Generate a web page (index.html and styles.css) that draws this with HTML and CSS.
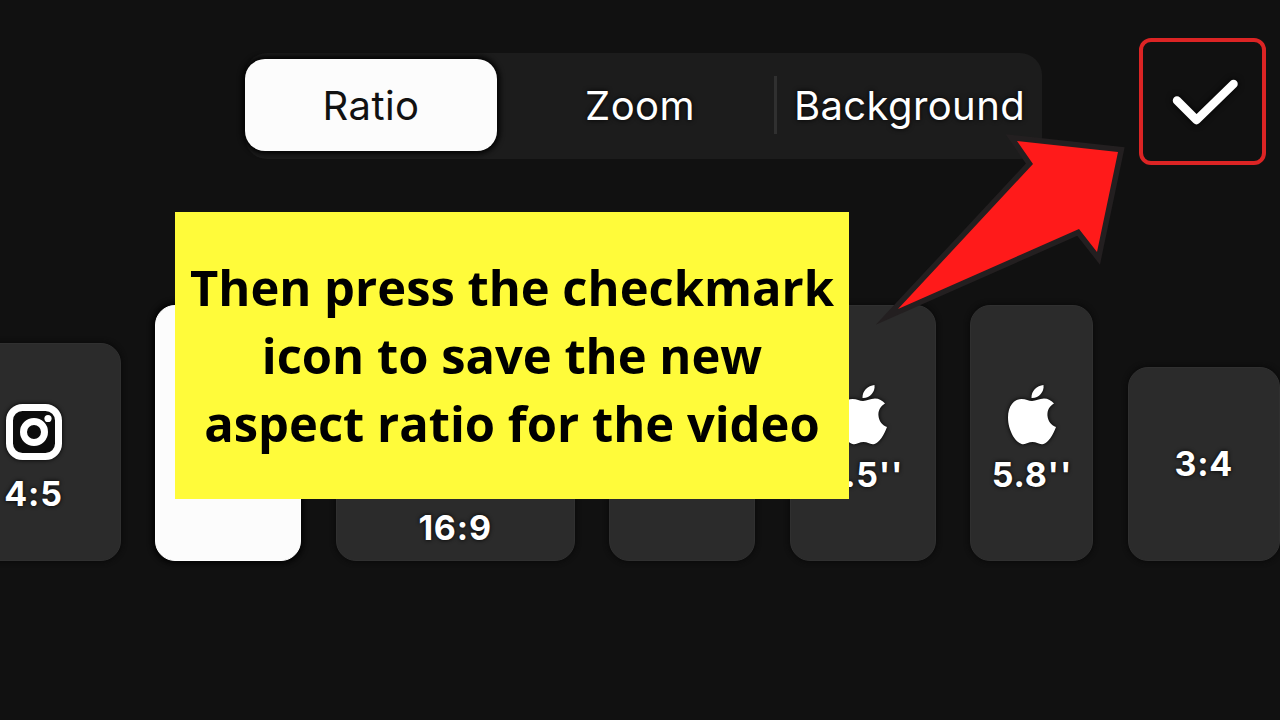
FILE: index.html
```
<!DOCTYPE html>
<html lang="en">
<head>
    <meta charset="UTF-8">
    <meta name="viewport" content="width=device-width, initial-scale=1.0">
    <title>Aspect Ratio</title>
    <link rel="stylesheet" href="styles.css">
</head>
<body>
    <div class="editor">
        <!-- Tabs and confirm button -->
        <header class="toolbar">
            <nav class="tabs">
                <a class="tab active">Ratio</a>
                <a class="tab zoom">Zoom</a>
                <a class="tab background">Background</a>
            </nav>
            <div class="confirm">
                <svg width="68" height="48" viewBox="0 0 68 48">
                    <path d="M6 22.5 L25.5 42 L62.5 6" />
                </svg>
            </div>
        </header>

        <!-- Ratio tiles -->
        <div class="ratios">
            <div class="tile instagram">
                <svg width="56" height="56" viewBox="0 0 56 56">
                    <rect class="line" x="3.5" y="3.5" width="49" height="49" rx="13" />
                    <circle class="line" cx="28" cy="28" r="10.5" />
                    <circle class="dot" cx="42" cy="14.5" r="3.6" />
                </svg>
                <span>4:5</span>
            </div>
            <div class="tile tall selected"></div>
            <div class="tile wide"><span>16:9</span></div>
            <div class="tile tall"></div>
            <div class="tile tall phone">
                <svg class="apple" width="50" height="60" viewBox="0 0 50 60">
                    <path d="M25 16 C29 16 32 13.500 37 13.500 C41 13.500 44.500 15.500 47 18.500 C42 21.500 40 26 40.500 31 C41 36 44 40 49 42 C46 50 41 58 36.500 59 C32 60 30 57 25.500 57 C21 57 19 60 14.500 59 C8 57 1 45 1 32.500 C1 21 7 14 14.500 14 C19 14 21.500 16 25 16 Z" />
                    <path d="M24.500 13 C24 6 30 0.500 36.500 0 C37.500 7 31.500 13.500 24.500 13 Z" />
                </svg>
                <span>5.5''</span>
            </div>
            <div class="tile tall narrow phone">
                <svg class="apple" width="50" height="60" viewBox="0 0 50 60">
                    <path d="M25 16 C29 16 32 13.500 37 13.500 C41 13.500 44.500 15.500 47 18.500 C42 21.500 40 26 40.500 31 C41 36 44 40 49 42 C46 50 41 58 36.500 59 C32 60 30 57 25.500 57 C21 57 19 60 14.500 59 C8 57 1 45 1 32.500 C1 21 7 14 14.500 14 C19 14 21.500 16 25 16 Z" />
                    <path d="M24.500 13 C24 6 30 0.500 36.500 0 C37.500 7 31.500 13.500 24.500 13 Z" />
                </svg>
                <span>5.8''</span>
            </div>
            <div class="tile portrait"><span>3:4</span></div>
        </div>

        <!-- Instruction and arrow on top of the editor -->
        <svg class="arrow" width="270" height="210" viewBox="0 0 270 210">
            <polygon points="157,21 258,32 237,132 219,109 38,189 173,44" />
        </svg>
        <div class="callout">Then press the checkmark<br>icon to save the new<br>aspect ratio for the video</div>
    </div>
</body>
</html>
```

FILE: styles.css
```
body {
    margin: 0;
    background-color: #111;
    color: #fff;
    font-family: Inter, sans-serif;
}
.editor {
    position: relative;
    width: 1280px;
    height: 720px;
    overflow: hidden;
}
.toolbar {
    display: flex;
    align-items: flex-start;
    justify-content: space-between;
    box-sizing: border-box;
    height: 304px;
    padding: 38px 14px 0 245px;
}
.tabs {
    display: flex;
    align-items: center;
    box-sizing: border-box;
    width: 797px;
    height: 106px;
    margin-top: 15px;
    padding-bottom: 2px;
    background-color: #1c1c1c;
    border-radius: 22px;
}
.tab {
    box-sizing: border-box;
    height: 58px;
    line-height: 60px;
    font-size: 40px;
    letter-spacing: 0.4px;
    text-align: center;
    text-shadow: 0 0 5px #000;
}
.tab.active {
    width: 252px;
    height: 92px;
    line-height: 94px;
    background-color: #fcfcfc;
    color: #111;
    border-radius: 20px;
    box-shadow: 0 0 5px 3px #050505;
    text-shadow: none;
}
.tab.zoom {
    width: 280px;
    padding-left: 9px;
    border-right: 3px solid #303030;
}
.tab.background {
    width: 265px;
}
.confirm {
    display: flex;
    align-items: center;
    justify-content: center;
    box-sizing: border-box;
    width: 127px;
    height: 127px;
    border: 4px solid #dc2424;
    border-radius: 12px;
    padding-left: 4px;
}
.confirm svg {
    fill: none;
    stroke: #fff;
    stroke-width: 8.5;
    stroke-linecap: round;
    stroke-linejoin: round;
    filter: drop-shadow(0 0 3px #000);
}
.ratios {
    display: flex;
    align-items: flex-end;
    gap: 34.3px;
    height: 256.5px;
    margin-left: -53.5px;
}
.tile {
    display: flex;
    flex-direction: column;
    align-items: center;
    justify-content: center;
    flex: none;
    box-sizing: border-box;
    background-color: #2b2b2b;
    border: 1px solid #303030;
    border-radius: 20px;
    box-shadow: 0 0 5px 1px #0a0a0a;
    font-size: 34px;
    font-weight: 700;
    letter-spacing: 0.8px;
    text-shadow: 0 0 4px #000;
}
.tile span {
    line-height: 40px;
}
.tile svg {
    filter: drop-shadow(0 0 2px #000);
}
.instagram {
    width: 174px;
    height: 218px;
    padding-top: 14px;
}
.instagram svg {
    margin-bottom: 14px;
}
.instagram .line {
    fill: #0c0c0c;
    stroke: #fff;
    stroke-width: 7;
}
.instagram .dot {
    fill: #fff;
}
.tall {
    width: 146.5px;
    height: 256px;
}
.narrow {
    width: 123px;
}
.phone {
    padding-top: 15px;
}
.selected {
    background-color: #fcfcfc;
    border-color: #fff;
    box-shadow: 0 0 5px 3px #050505;
}
.wide {
    width: 239px;
    height: 134px;
    padding-top: 68px;
}
.portrait {
    width: 152px;
    height: 194px;
    padding-top: 1px;
}
.apple {
    fill: #fff;
    margin-bottom: 10px;
}
.arrow {
    position: absolute;
    left: 860px;
    top: 120px;
    fill: #ff1a1a;
    stroke: #231f20;
    stroke-width: 11;
    stroke-miterlimit: 10;
    paint-order: stroke;
}
.callout {
    position: absolute;
    left: 175px;
    top: 212px;
    box-sizing: border-box;
    width: 674px;
    height: 287px;
    padding-top: 41px;
    background-color: #fffb3a;
    color: #000;
    font-family: "Open Sans", "Noto Sans", sans-serif;
    font-size: 48.9px;
    font-weight: 700;
    line-height: 68px;
    text-align: center;
    white-space: nowrap;
}
```
